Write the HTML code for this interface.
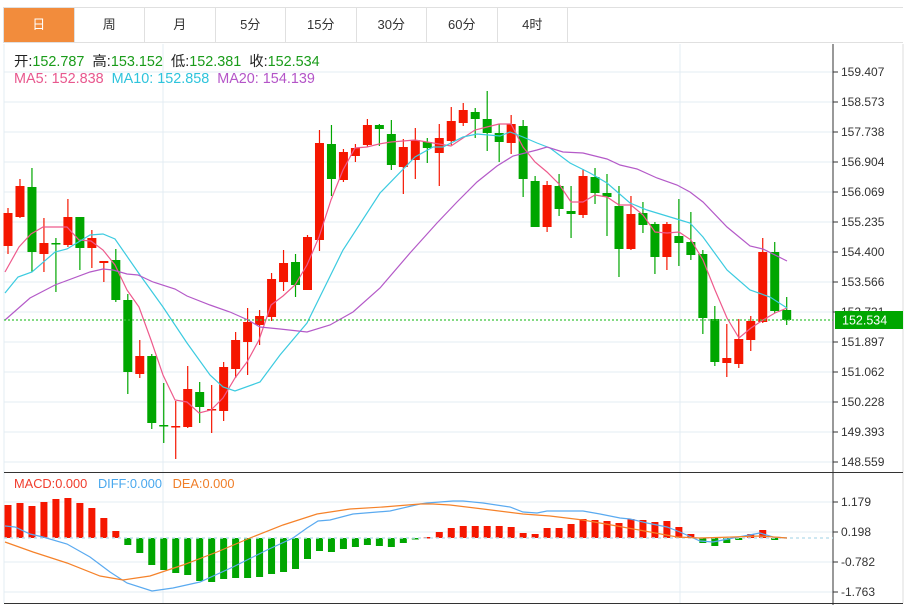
<!DOCTYPE html>
<html><head><meta charset="utf-8"><style>
html,body{margin:0;padding:0;background:#fff;width:911px;height:605px;overflow:hidden;font-family:"Liberation Sans","Noto Sans CJK SC",sans-serif}
.tabs{position:absolute;left:3px;top:7px;width:900px;height:36px;border:1px solid #e0e0e0;box-sizing:border-box;display:flex;border-right:none}
.tab{width:70.5px;height:34px;border-right:1px solid #e0e0e0;text-align:center;line-height:34px;font-size:13px;color:#333;box-sizing:border-box}
.tab.on{background:#f28c3c;color:#fff}
.info{position:absolute;left:14px;font-size:14.4px;white-space:nowrap}
svg{position:absolute;left:0;top:0}
</style></head><body>
<div class="tabs"><div class="tab on">日</div><div class="tab">周</div><div class="tab">月</div><div class="tab">5分</div><div class="tab">15分</div><div class="tab">30分</div><div class="tab">60分</div><div class="tab">4时</div></div>
<svg id="s" width="911" height="605" xmlns="http://www.w3.org/2000/svg"></svg>
<div class="info" style="top:50px;color:#222">开:<span style="color:#1a9c1a">152.787</span>&nbsp; 高:<span style="color:#1a9c1a">153.152</span>&nbsp; 低:<span style="color:#1a9c1a">152.381</span>&nbsp; 收:<span style="color:#1a9c1a">152.534</span></div>
<div class="info" style="top:71px"><span style="color:#e8588e">MA5: 152.838</span>&nbsp; <span style="color:#2ec4dc">MA10: 152.858</span>&nbsp; <span style="color:#b455c8">MA20: 154.139</span></div>
<div class="info" style="top:476px;font-size:12.8px"><span style="color:#f03c2c">MACD:0.000</span>&nbsp;&nbsp; <span style="color:#4aa8ee">DIFF:0.000</span>&nbsp;&nbsp; <span style="color:#f07e28">DEA:0.000</span></div>
<script>
var s=document.getElementById('s'),h='';
function L(x1,y1,x2,y2,c,w,extra){h+='<line x1="'+x1+'" y1="'+y1+'" x2="'+x2+'" y2="'+y2+'" stroke="'+c+'" stroke-width="'+(w||1)+'" '+(extra||'')+'/>';}
function R(x,y,w,hh,c){h+='<rect x="'+x+'" y="'+y+'" width="'+w+'" height="'+Math.max(hh,1.5)+'" fill="'+c+'"/>';}
function P(pts,c,w){var d='';for(var i=0;i<pts.length;i+=2)d+=(i?'L':'M')+pts[i]+' '+pts[i+1];h+='<path d="'+d+'" fill="none" stroke="'+c+'" stroke-width="'+(w||1.2)+'"/>';}
function T(x,y,t,c){h+='<text x="'+x+'" y="'+y+'" font-size="12" fill="'+(c||'#333')+'" font-family="Liberation Sans,sans-serif">'+t+'</text>';}
var labs=['159.407','158.573','157.738','156.904','156.069','155.235','154.400','153.566','152.731','151.897','151.062','150.228','149.393','148.559'];
for(var k=0;k<14;k++){var y=72+30*k;L(4,y,833,y,'#e3ecf3');L(833,y,838,y,'#333');T(841,y+4,labs[k]);}
var ml=['1.179','0.198','-0.782','-1.763'];
for(var k=0;k<4;k++){var y=502+30*k;L(4,y,833,y,'#e3ecf3');L(833,y,838,y,'#333');T(841,y+4,ml[k]);}
L(163,44,163,603,'#e3ecf3');L(680,44,680,603,'#e3ecf3');L(4,44,4,603,'#e3ecf3');
L(903,44,903,603,'#ddd');
L(833,44,833,605,'#333');L(4,472.5,903,472.5,'#333');L(4,603.5,903,603.5,'#333');
var c=[[213,246,208,254,1],[186,217,179,218,1],[187,252,168,272,0],[243,254,218,272,1],[243,244,238,292,0],[217,245,199,247,1],[217,248,217,270,0],[238,248,230,268,1],[261,263,261,282,1],[260,300,249,302,0],[300,372,294,394,0],[356,374,340,378,1],[356,423,354,429,0],[425,426,383,443,0],[426,427,401,459,1],[389,427,366,428,1],[392,407,382,423,0],[409,410,385,433,1],[367,411,362,421,1],[340,369,332,378,1],[322,342,308,375,1],[316,325,310,345,1],[279,317,273,321,1],[263,282,250,291,1],[262,285,254,297,0],[237,290,235,290,1],[143,240,130,251,1],[144,179,125,196,0],[152,180,149,182,1],[148,156,144,162,1],[125,145,119,147,1],[125,129,124,146,0],[134,165,120,170,0],[147,167,139,194,1],[140,160,128,179,1],[142,148,138,163,0],[138,153,124,186,1],[121,141,107,145,1],[110,123,103,126,1],[112,119,108,138,0],[119,133,91,151,0],[133,142,124,162,0],[124,143,115,154,1],[126,179,120,197,0],[181,227,176,227,0],[185,227,181,232,1],[186,209,174,216,0],[211,214,186,238,0],[176,215,169,218,1],[177,193,168,204,0],[193,197,174,236,0],[206,249,186,277,0],[214,249,196,250,1],[213,225,202,233,0],[224,257,222,274,0],[224,257,222,270,1],[236,243,199,266,0],[242,255,212,260,0],[254,318,250,334,0],[319,362,306,366,0],[358,363,324,377,1],[339,364,319,368,1],[321,340,316,351,1],[252,322,238,323,1],[252,311,242,313,0],[310,320,297,325,0]];
var RED='#f51600',GRN='#00a600';
for(var i=0;i<c.length;i++){var x=8+i*11.98,q=c[i],col=q[4]?RED:GRN;L(x,q[2],x,q[3],col,1.2);R(x-4.5,q[0],9,q[1]-q[0],col);}
P([5,272,19,247,31,234,43,227,55,227,67,227,79,240,91,241,103,250,115,265,127,290,139,307,151,340,163,375,175,400,187,402,199,413,211,410,223,398,235,378,247,362,259,340,271,305,283,296,295,285,307,265,319,237,331,200,343,170,355,148,367,147,379,144,391,142,403,141,415,140,427,142,439,144,451,146,463,138,475,130,487,127,499,124,511,124,523,147,535,162,547,172,559,184,571,202,583,202,595,195,607,197,619,205,631,205,643,215,655,232,667,233,679,232,691,240,703,260,715,290,727,318,739,338,751,328,763,320,775,313,787,308],'#ee5a8c');
P([5,293,18,277,32,272,55,252,67,249,90,235,103,234,115,239,140,275,163,307,187,343,210,375,223,387,235,391,260,382,280,355,307,323,343,250,380,193,415,157,433,147,443,147,463,137,477,134,500,136,510,132,523,137,537,143,550,148,570,163,590,173,607,183,630,203,647,210,680,220,690,223,703,237,727,270,750,290,770,297,787,308],'#3ccbe0');
P([5,320,30,298,55,285,90,272,103,269,113,270,127,274,138,275,153,282,175,289,187,296,210,305,230,312,248,320,260,327,280,329,307,332,330,325,353,312,380,288,410,253,437,223,457,202,477,182,497,166,513,156,537,150,547,147,563,152,583,153,607,159,620,165,637,169,657,178,677,185,690,192,703,202,727,227,750,246,763,249,787,261],'#b45ac8');
L(4,320,833,320,'#3cc43c',1.2,'stroke-dasharray="2,2"');
R(835,311,68,18,'#00a600');h+='<text x="842" y="324.5" font-size="12.5" fill="#fff" font-family="Liberation Sans,sans-serif">152.534</text>';
var mb=[505,503,506,502,499,498,503,508,518,531,545,553,565,570,573,575,581,582,579,578,578,577,574,572,569,559,551,552,549,547,545,546,547,543,539,537,532,528,526,526,526,526,527,533,534,528,528,524,519,520,521,523,519,520,522,521,527,534,543,546,543,540,534,530,540];
for(var i=0;i<mb.length;i++){var x=8+i*11.98,v=mb[i];if(v<538)R(x-3.5,v,7,538-v,RED);else R(x-3.5,538,7,v-538,GRN);}
L(4,538,833,538,'#bfe0ee',1.5,'stroke-dasharray="3,3"');
P([5,526,15,527,30,534,43,537,67,544,90,557,110,572,127,583,152,591,173,588,200,582,233,567,267,550,293,538,307,528,318,521,330,520,353,514,390,511,420,504,427,503,453,501,463,501,483,503,510,507,523,512,537,513,547,511,583,511,600,514,620,518,630,519,647,523,667,527,680,532,700,541,713,542,733,538,760,533,773,537,787,538],'#5aaaf0');
P([5,542,33,552,67,563,100,576,123,580,150,576,183,565,217,552,250,538,283,525,317,514,350,509,383,507,420,504,433,504,450,505,483,509,523,514,550,516,583,520,617,526,650,532,677,537,700,538,733,537,760,536,787,538],'#f5822a');
s.innerHTML=h;
</script>
</body></html>
